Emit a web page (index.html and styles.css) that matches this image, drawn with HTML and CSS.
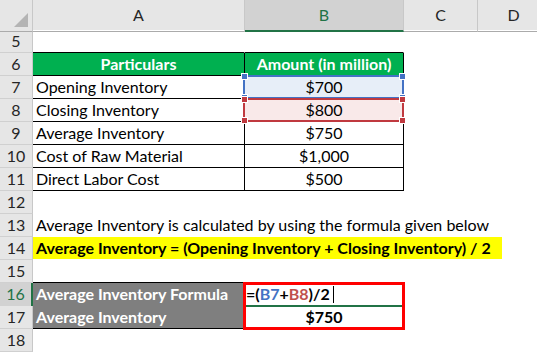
FILE: index.html
```html
<!DOCTYPE html>
<html lang="en">
  <head>
    <meta charset="UTF-8" />
    <title>Average Inventory</title>
    <link rel="stylesheet" href="styles.css">
  </head>
  <body>
    <div class="sheet">
      <!-- column headers -->
      <div class="row cols">
        <div class="corner"><span class="tri"></span></div>
        <div>A</div>
        <div class="sel">B</div>
        <div>C</div>
        <div>D</div>
      </div>

      <div class="row">
        <div class="num">5</div>
        <div class="edge"></div>
        <div class="edge"></div>
        <div></div>
        <div></div>
      </div>

      <div class="row">
        <div class="num">6</div>
        <div class="t head">Particulars</div>
        <div class="t head">Amount (in million)</div>
        <div></div>
        <div></div>
      </div>

      <div class="row">
        <div class="num">7</div>
        <div class="t">Opening Inventory</div>
        <div class="t val ref blue">
          $700
          <span class="box"><i class="tl"></i><i class="tr"></i><i class="bl"></i><i class="br"></i></span>
        </div>
        <div></div>
        <div></div>
      </div>

      <div class="row">
        <div class="num">8</div>
        <div class="t">Closing Inventory</div>
        <div class="t val ref red">
          $800
          <span class="box"><i class="tl"></i><i class="tr"></i><i class="bl"></i><i class="br"></i></span>
        </div>
        <div></div>
        <div></div>
      </div>

      <div class="row">
        <div class="num">9</div>
        <div class="t">Average Inventory</div>
        <div class="t val">$750</div>
        <div></div>
        <div></div>
      </div>

      <div class="row">
        <div class="num">10</div>
        <div class="t">Cost of Raw Material</div>
        <div class="t val">$1,000</div>
        <div></div>
        <div></div>
      </div>

      <div class="row">
        <div class="num">11</div>
        <div class="t">Direct Labor Cost</div>
        <div class="t val">$500</div>
        <div></div>
        <div></div>
      </div>

      <div class="row">
        <div class="num">12</div>
        <div class="wide"></div>
      </div>

      <div class="row">
        <div class="num">13</div>
        <div class="wide">Average Inventory is calculated by using the formula given below</div>
      </div>

      <div class="row">
        <div class="num">14</div>
        <div class="wide"><span class="hl">Average Inventory = (Opening Inventory + Closing Inventory) / 2</span></div>
      </div>

      <div class="row">
        <div class="num">15</div>
        <div class="edge"></div>
        <div></div>
        <div></div>
        <div></div>
      </div>

      <div class="row">
        <div class="num sel">16</div>
        <div class="t grey">Average Inventory Formula</div>
        <div class="t formula">
          =(<span class="c-blue">B7</span>+<span class="c-red">B8</span>)/2<span class="caret"></span>
          <span class="redbox"></span>
        </div>
        <div></div>
        <div></div>
      </div>

      <div class="row">
        <div class="num">17</div>
        <div class="t grey">Average Inventory</div>
        <div class="t val strong">$750</div>
        <div></div>
        <div></div>
      </div>

      <div class="row">
        <div class="num">18</div>
        <div></div>
        <div></div>
        <div></div>
        <div></div>
      </div>
    </div>
  </body>
</html>
```

FILE: styles.css
```css
body {
  margin: 0;
  font-family: Lato, "Open Sans", sans-serif;
  font-size: 16px;
  color: #000;
  background: #fff;
  overflow: hidden;
}

.sheet {
  width: 550px;
}

.row {
  display: grid;
  grid-template-columns: 33px 212px 159px 74px 72px;
  height: 23px;
}

.row > div {
  box-sizing: border-box;
  border-right: 1px solid transparent;
  border-bottom: 1px solid transparent;
  padding: 0 3px;
  line-height: 22px;
  white-space: nowrap;
}

/* column header strip */
.cols {
  height: 30px;
  background: #e6e6e6;
}

.cols > div {
  text-align: center;
  line-height: 30px;
  color: #262626;
  border-right-color: #c8c8c8 !important;
  border-bottom-color: #ababab !important;
}

.cols .sel {
  background: #d2d2d2;
  color: #217346;
  border-bottom: 2px solid #217346 !important;
}

.corner {
  position: relative;
}

.corner .tri {
  position: absolute;
  right: 4px;
  bottom: 4px;
  width: 14px;
  height: 14px;
  background: #b4b4b4;
  clip-path: polygon(100% 0, 100% 100%, 0 100%);
}

/* row numbers */
.num {
  background: #e6e6e6;
  text-align: center;
  color: #262626;
  border-right-color: #c8c8c8 !important;
  border-bottom-color: #d0d0d0 !important;
}

.num.sel {
  background: #d2d2d2;
  color: #217346;
  border-right: 2px solid #217346 !important;
}

/* bordered table cells */
.t {
  border-right-color: #000 !important;
  border-bottom-color: #000 !important;
}

.edge {
  border-bottom-color: #000 !important;
}

.head {
  background: #00b050;
  color: #fff;
  font-weight: bold;
  text-align: center;
}

.val {
  text-align: center;
}

.strong {
  font-weight: bold;
}

.grey {
  background: #7f7f7f;
  color: #fff;
  font-weight: bold;
}

.wide {
  grid-column: 2 / -1;
}

.hl {
  display: block;
  width: 469px;
  margin-left: -3px;
  padding-left: 3px;
  box-sizing: border-box;
  background: #ffff00;
  font-weight: bold;
}

/* formula reference boxes */
.ref {
  position: relative;
}

.ref.blue {
  background: #e7eef8;
}

.ref.red {
  background: #f9e9e9;
}

.ref .box {
  position: absolute;
  left: -2px;
  top: -1px;
  width: 161px;
  height: 24px;
  box-sizing: border-box;
  border: 2px solid;
}

.ref.blue .box {
  color: #4472c4;
}

.ref.red .box {
  color: #c0393f;
}

.box i {
  position: absolute;
  width: 5px;
  height: 5px;
  background: currentColor;
  border: 1px solid #fff;
}

.box .tl { left: -4px; top: -4px; }
.box .tr { right: -4px; top: -4px; }
.box .bl { left: -4px; bottom: -4px; }
.box .br { right: -4px; bottom: -4px; }

/* edited cell */
.formula {
  position: relative;
  font-weight: bold;
  padding-left: 1px !important;
  border-bottom: 2px solid #217346 !important;
}

.c-blue {
  color: #4472c4;
}

.c-red {
  color: #c0504d;
}

.caret {
  display: inline-block;
  width: 1px;
  height: 17px;
  margin-left: 3px;
  background: #000;
  vertical-align: -3px;
}

.redbox {
  position: absolute;
  left: -2px;
  top: -1px;
  width: 162px;
  height: 48px;
  box-sizing: border-box;
  border: 3px solid #ff0000;
}
```
